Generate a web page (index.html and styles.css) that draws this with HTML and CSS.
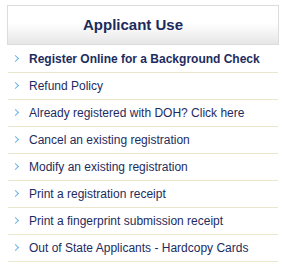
FILE: index.html
```html
<!DOCTYPE html>
<html lang="en">
<head>
    <meta charset="UTF-8">
    <title>Applicant Use</title>
    <link rel="stylesheet" href="styles.css">
</head>
<body>
    <div class="panel">
        <h2 class="panel-title">Applicant Use</h2>
        <ul class="links">
            <li class="first"><a href="#">Register Online for a Background Check</a></li>
            <li><a href="#">Refund Policy</a></li>
            <li><a href="#">Already registered with DOH? Click here</a></li>
            <li><a href="#">Cancel an existing registration</a></li>
            <li><a href="#">Modify an existing registration</a></li>
            <li><a href="#">Print a registration receipt</a></li>
            <li><a href="#">Print a fingerprint submission receipt</a></li>
            <li><a href="#">Out of State Applicants - Hardcopy Cards</a></li>
        </ul>
    </div>
</body>
</html>
```

FILE: styles.css
```css
body {
    margin: 0;
    background: #fff;
    font-family: Arial, "Liberation Sans", sans-serif;
}
.panel {
    width: 272px;
    margin: 5px 0 0 7px;
}
.panel-title {
    margin: 0;
    height: 38px;
    line-height: 38px;
    padding-right: 20px;
    border: 1px solid #dcdcdc;
    background: linear-gradient(to bottom, #fff 0%, #fff 45%, #e6e6e6 100%);
    text-align: center;
    font-size: 15px;
    font-weight: bold;
    color: #1b2a5c;
}
.links {
    list-style: none;
    margin: 1px 0 0 1px;
    padding: 0;
    width: 270px;
}
.links li {
    height: 26px;
    line-height: 26px;
    border-bottom: 1px solid #eae7cc;
    padding-left: 21px;
    position: relative;
    font-size: 12px;
    white-space: nowrap;
}
.links li::before {
    content: "";
    position: absolute;
    left: 5px;
    top: 10px;
    width: 4px;
    height: 4px;
    border-top: 1.5px solid #6cb4e4;
    border-right: 1.5px solid #6cb4e4;
    transform: rotate(45deg);
}
.links a {
    color: #1d2c5e;
    text-decoration: none;
}
.links li.first a {
    font-weight: bold;
}
```
